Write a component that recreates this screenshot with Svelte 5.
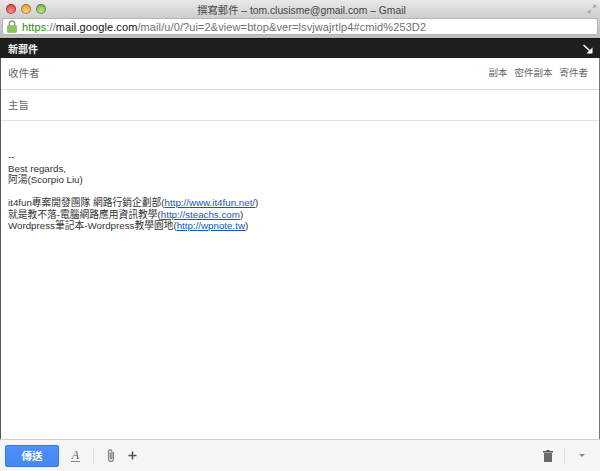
<script>
  // Compose popup window: browser chrome, compose header, fields, body, toolbar
  const signature = [
    { text: 'it4fun專案開發團隊 網路行銷企劃部', url: 'http://www.it4fun.net/' },
    { text: '就是教不落-電腦網路應用資訊教學', url: 'http://steachs.com' },
    { text: 'Wordpress筆記本-Wordpress教學園地', url: 'http://wpnote.tw' }
  ];
</script>

<div class="window">
  <div class="titlebar">
    <div class="lights">
      <span class="light red"></span>
      <span class="light yellow"></span>
      <span class="light green"></span>
    </div>
    <div class="title">撰寫郵件 – tom.clusisme@gmail.com – Gmail</div>
    <svg class="fullscreen" width="10" height="10" viewBox="0 0 12 12">
      <path d="M7 1h4v4L9.700 3.700 8 5.400 6.600 4 8.300 2.300z" fill="#a9a9a9" />
      <path d="M5 11H1V7l1.300 1.300L4 6.600 5.400 8 3.700 9.700z" fill="#a9a9a9" />
    </svg>
  </div>

  <div class="addressbar">
    <div class="urlbox">
      <svg class="lock" width="10" height="13" viewBox="0 0 10 13">
        <path d="M2.300 6V3.600a2.700 2.700 0 0 1 5.400 0V6" fill="none" stroke="#9a9a9a" stroke-width="1.500" />
        <rect x="0.300" y="5.500" width="9.400" height="7" rx="1" fill="#8cc756" stroke="#75ad45" stroke-width="0.500" />
      </svg>
      <span class="url"><span class="https">https</span><span class="dim">://</span><span class="host">mail.google.com</span><span class="dim">/mail/u/0/?ui=2&amp;view=btop&amp;ver=lsvjwajrtlp4#cmid%253D2</span></span>
    </div>
  </div>

  <div class="compose">
    <header class="compose-head">
      <span class="compose-title">新郵件</span>
      <svg width="10" height="10" viewBox="0 0 10 10">
        <path d="M0.500 1 6.500 6.500" stroke="#fff" stroke-width="1.500" fill="none" />
        <path d="M9.500 3.500V9.500H3.500z" fill="#fff" />
      </svg>
    </header>

    <div class="field recipients">
      <span class="label">收件者</span>
      <div class="cc">
        <span>副本</span>
        <span>密件副本</span>
        <span>寄件者</span>
      </div>
    </div>
    <div class="field subject">
      <span class="label">主旨</span>
    </div>

    <div class="body">
      <div>--</div>
      <div>Best regards,</div>
      <div>阿湯(Scorpio Liu)</div>
      <div class="gap"></div>
      {#each signature as line}
        <div>{line.text}(<a href={line.url}>{line.url}</a>)</div>
      {/each}
    </div>

    <footer class="toolbar">
      <button class="send" type="button">傳送</button>
      <span class="format">A</span>
      <span class="sep"></span>
      <svg class="clip" width="10" height="15" viewBox="0 0 10 15">
        <path d="M7.500 4v7a2.500 2.500 0 0 1-5 0V3.500a1.700 1.700 0 0 1 3.400 0V10a.8.8 0 0 1-1.600 0V4.500" fill="none" stroke="#808080" stroke-width="1.200" />
      </svg>
      <svg class="plus" width="9" height="9" viewBox="0 0 9 9">
        <path d="M4.500 0.500v8M0.500 4.500h8" stroke="#555" stroke-width="1.600" />
      </svg>
      <span class="spacer"></span>
      <svg class="trash" width="10" height="12" viewBox="0 0 10 12">
        <path d="M3.500 0h3v1H10v1.500H0V1H3.500z" fill="#555" />
        <path d="M1 3h8v9H1z" fill="#6a6a6a" />
      </svg>
      <span class="sep right"></span>
      <span class="more"></span>
    </footer>
  </div>
</div>

<style>
  :global(body) {
    margin: 0;
    background: #fff;
  }

  .window {
    width: 600px;
    height: 471px;
    display: flex;
    flex-direction: column;
    overflow: hidden;
    font-family: "Liberation Sans", "Noto Sans CJK TC", sans-serif;
  }

  .titlebar {
    height: 17px;
    padding: 1px 3px 0 6px;
    box-sizing: border-box;
    display: grid;
    grid-template-columns: 1fr auto 1fr;
    align-items: center;
    background: linear-gradient(#e9e9e9, #cfcfcf);
  }

  .lights {
    display: flex;
    gap: 5px;
  }

  .light {
    width: 10px;
    height: 10px;
    border-radius: 50%;
    box-shadow: inset 0 0 0 1px rgba(0, 0, 0, 0.25);
  }
  .red { background: radial-gradient(circle at 50% 70%, #f58f8a, #cf2f2c); }
  .yellow { background: radial-gradient(circle at 50% 70%, #f9d27e, #d98a18); }
  .green { background: radial-gradient(circle at 50% 70%, #bce08a, #66a53a); }

  .title {
    font-size: 10.300px;
    color: #444;
  }

  .fullscreen {
    justify-self: end;
  }

  .addressbar {
    height: 21px;
    box-sizing: border-box;
    background: linear-gradient(#cfcfcf, #bdbdbd);
    padding: 1px 2px 3px 2px;
  }

  .urlbox {
    height: 17px;
    display: flex;
    align-items: center;
    gap: 5px;
    padding-left: 5px;
    background: #fff;
    border-radius: 3px;
    box-shadow: inset 0 0 0 1px #b5b5b5;
  }

  .url {
    padding-top: 1px;
    font-size: 11px;
    color: #666;
    white-space: nowrap;
    letter-spacing: 0.1px;
  }
  .https { color: #2d8a16; }
  .dim { color: #6f6f6f; }
  .host { color: #111; }

  .compose {
    flex: 1;
    display: flex;
    flex-direction: column;
    min-height: 0;
    border-left: 1px solid #555;
    border-right: 1px solid #777;
  }

  .compose-head {
    height: 20px;
    box-sizing: border-box;
    margin: 0 -1px;
    padding: 0 7px 0 8px;
    background: #1f1f1f;
    border-top: 1px solid #111;
    display: flex;
    align-items: center;
    justify-content: space-between;
  }

  .compose-title {
    font-size: 10px;
    font-weight: 700;
    color: #f2f2f2;
  }

  .field {
    display: flex;
    align-items: center;
    justify-content: space-between;
    padding: 0 11px 0 7px;
    background: #fff;
    border-bottom: 1px solid #dcdcdc;
  }
  .recipients { height: 31px; }
  .subject { height: 30px; border-bottom-color: #e3e3e3; }

  .label {
    margin-bottom: 2px;
    font-size: 10.500px;
    color: #666;
  }

  .cc {
    display: flex;
    gap: 7px;
    margin-bottom: 3px;
    font-size: 9.500px;
    color: #666;
  }

  .body {
    flex: 1;
    min-height: 0;
    padding: 30px 7px 0;
    font-size: 9.750px;
    line-height: 11.500px;
    color: #333;
    background: #fff;
  }

  .gap {
    height: 11.500px;
  }

  .body a {
    color: #1155cc;
    text-decoration: underline;
  }

  .toolbar {
    height: 32px;
    box-sizing: border-box;
    margin: 0 -1px;
    padding: 0 4px 0 5px;
    display: flex;
    align-items: center;
    background: #f5f5f5;
    border-top: 1px solid #cfcfcf;
  }

  .send {
    width: 54px;
    height: 22px;
    padding: 0;
    border: 1px solid #3079ed;
    border-radius: 2px;
    background: linear-gradient(#4d90fe, #4787ed);
    color: #fff;
    font-family: inherit;
    font-size: 10.500px;
    font-weight: 700;
  }

  .format {
    margin-left: 12px;
    font-family: "Liberation Serif", serif;
    font-style: italic;
    font-size: 12px;
    color: #666;
    width: 9px;
    text-align: center;
    border-bottom: 1px solid #888;
    line-height: 11px;
  }

  .sep {
    width: 1px;
    height: 16px;
    background: #dcdcdc;
    margin-left: 13px;
  }

  .clip {
    margin-left: 12px;
  }

  .plus {
    margin-left: 12px;
  }

  .spacer {
    flex: 1;
  }

  .trash {
    margin-right: 11px;
  }

  .sep.right {
    margin-left: 0;
  }

  .more {
    width: 0;
    height: 0;
    margin: 0 11px 0 14px;
    border-left: 3px solid transparent;
    border-right: 3px solid transparent;
    border-top: 3.500px solid #8a8a8a;
  }
</style>
